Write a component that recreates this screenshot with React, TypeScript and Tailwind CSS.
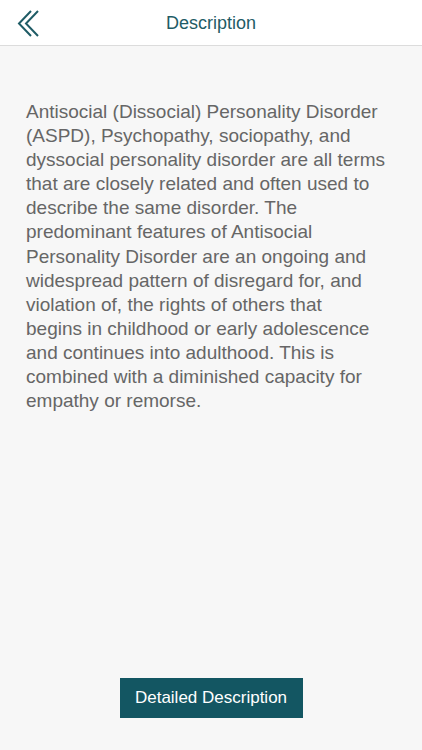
import React from "react";

const lines = [
  "Antisocial (Dissocial) Personality Disorder",
  "(ASPD), Psychopathy, sociopathy, and",
  "dyssocial personality disorder are all terms",
  "that are closely related and often used to",
  "describe the same disorder. The",
  "predominant features of Antisocial",
  "Personality Disorder are an ongoing and",
  "widespread pattern of disregard for, and",
  "violation of, the rights of others that",
  "begins in childhood or early adolescence",
  "and continues into adulthood. This is",
  "combined with a diminished capacity for",
  "empathy or remorse.",
];

export default function App() {
  return (
    <div
      className="flex h-[750px] w-full flex-col bg-[#f7f7f7]"
      style={{ fontFamily: '"Liberation Sans", Arial, sans-serif' }}
    >
      <header className="relative flex h-[46px] shrink-0 items-center justify-center border-b border-[#dcdcdc] bg-white">
        <button className="absolute left-[14px] top-[8px] h-[30px] w-[28px]">
          <svg viewBox="0 0 28 30" width="28" height="30" fill="none" stroke="#1f5c66" strokeWidth="2">
            <polyline points="17,3 5,15.5 17,28" />
            <polyline points="24,3 12,15.5 24,28" />
          </svg>
        </button>
        <h1 className="pt-[2px] text-[18px] text-[#1f5c66]">Description</h1>
      </header>
      <main className="flex flex-1 flex-col px-[26px] pt-[54px]">
        <p className="text-[19px] leading-[24.1px] text-[#666666]">
          {lines.map((l, i) => (
            <span key={i} className="block whitespace-nowrap">
              {l}
            </span>
          ))}
        </p>
      </main>
      <div className="flex shrink-0 justify-center pb-[32px]">
        <button className="h-[40px] w-[183px] bg-[#135662] text-[17px] text-white">
          Detailed Description
        </button>
      </div>
    </div>
  );
}
